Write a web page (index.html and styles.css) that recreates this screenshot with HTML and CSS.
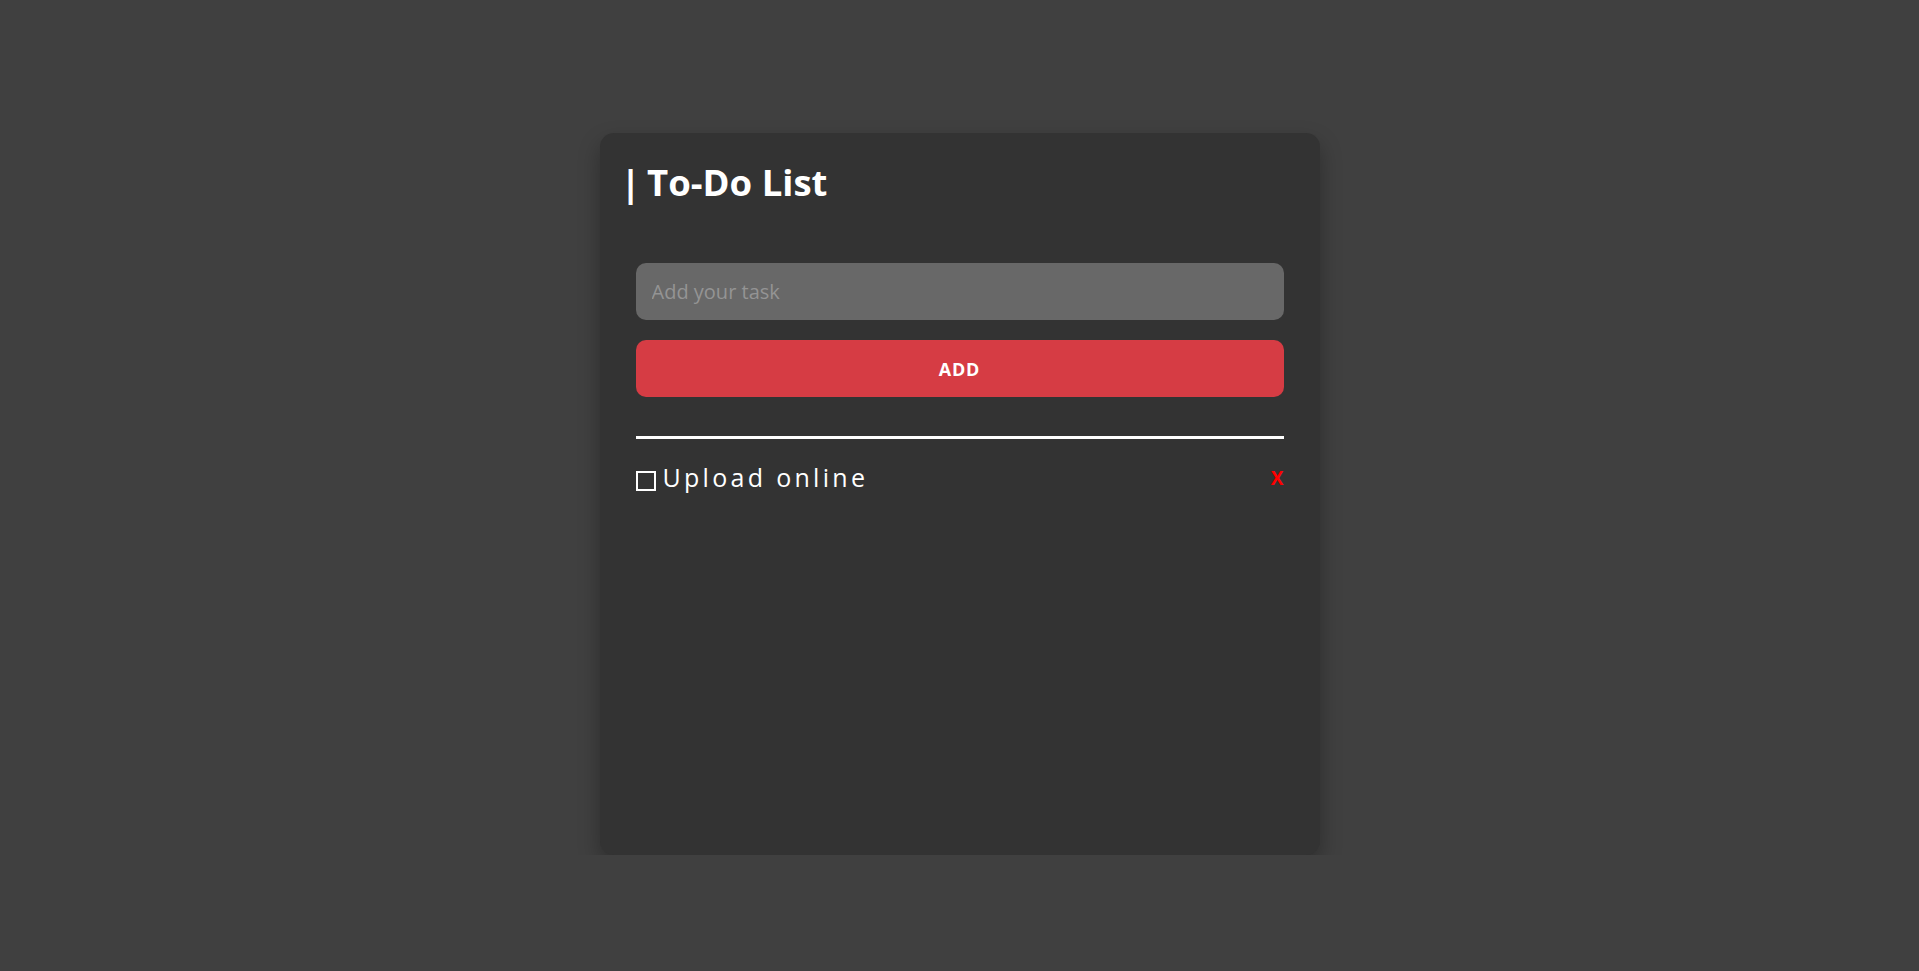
FILE: index.html
```html
<!DOCTYPE html>
<html lang="en">
<head>
<meta charset="utf-8">
<title>To-Do List</title>
<link rel="stylesheet" href="styles.css">
</head>
<body>
<main class="page">
  <section class="card">
    <h1 class="title"><span class="bar">|</span> To-Do List</h1>
    <div class="content">
      <form class="task-form" onsubmit="return false">
        <input class="task-input" type="text" placeholder="Add your task">
        <button class="add-btn" type="submit">ADD</button>
      </form>
      <hr class="divider">
      <ul class="tasks">
        <li class="task">
          <span class="check"></span>
          <span class="task-text">Upload online</span>
          <span class="remove">X</span>
        </li>
      </ul>
    </div>
  </section>
</main>
</body>
</html>
```

FILE: styles.css
```css
* { box-sizing: border-box; }

html, body {
  margin: 0;
  padding: 0;
  background: #404040;
}

body {
  font-family: "Open Sans", "Liberation Sans", sans-serif;
  color: #ffffff;
}

.page {
  display: flex;
  justify-content: center;
  padding-top: 133px;
}

.card {
  width: 720px;
  height: 722px;
  background: #333333;
  border-radius: 14px;
  box-shadow: 0 10px 22px rgba(0, 0, 0, 0.3);
  padding: 25px 36px 0;
}

.title {
  margin: 0 0 0 -15px;
  font-size: 36.5px;
  line-height: 48px;
  font-weight: 700;
  color: #ffffff;
}

.bar {
  letter-spacing: -3px;
}

.content {
  margin-top: 57px;
}

.task-form {
  display: flex;
  flex-direction: column;
  gap: 20px;
}

.task-input {
  height: 57px;
  border: none;
  outline: none;
  border-radius: 10px;
  background: #686868;
  padding: 0 16px;
  font-family: "Open Sans", sans-serif;
  font-size: 20px;
  color: #ffffff;
}

.task-input::placeholder {
  color: #949494;
}

.add-btn {
  height: 57px;
  border: none;
  border-radius: 10px;
  background: #d63c44;
  color: #ffffff;
  font-family: "Open Sans", sans-serif;
  font-weight: 700;
  font-size: 18px;
  letter-spacing: 0.8px;
  cursor: pointer;
}

.divider {
  margin: 39px 0 0;
  border: none;
  height: 3px;
  background: #ffffff;
}

.tasks {
  list-style: none;
  margin: 23px 0 0;
  padding: 0;
}

.task {
  display: flex;
  align-items: flex-start;
  height: 30px;
}

.check {
  width: 20px;
  height: 20px;
  border: 2px solid #ffffff;
  margin-top: 9px;
  margin-right: 7px;
  flex: none;
}

.task-text {
  flex: 1;
  font-size: 25px;
  line-height: 30px;
  letter-spacing: 3.3px;
  color: #ffffff;
}

.remove {
  color: #ff0000;
  font-weight: 700;
  font-size: 19px;
  line-height: 30px;
  margin-top: 1px;
  cursor: pointer;
}
```
